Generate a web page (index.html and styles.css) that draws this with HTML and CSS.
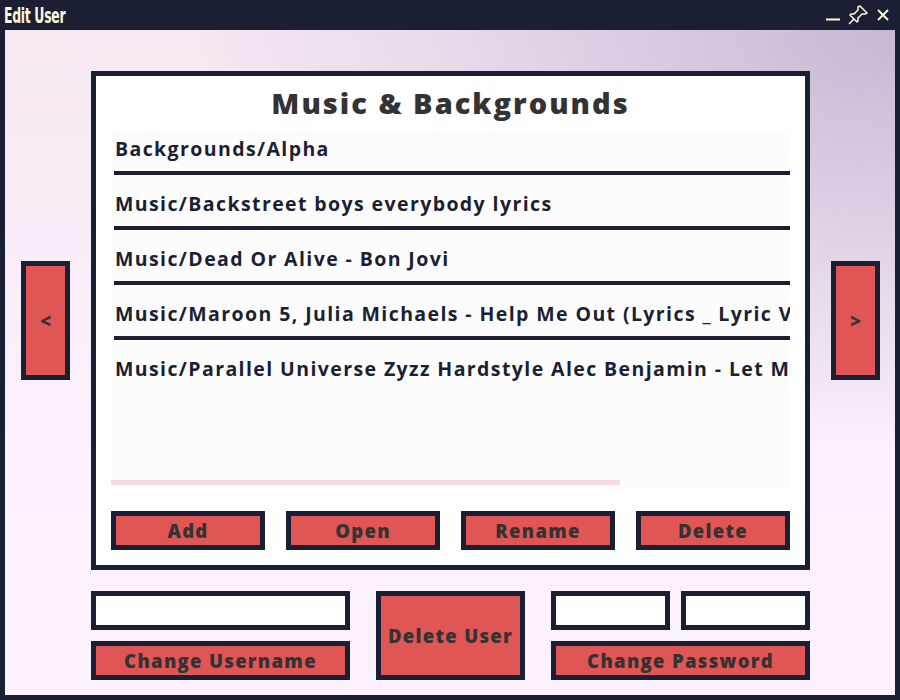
FILE: index.html
```html
<!DOCTYPE html>
<html lang="en">
<head>
    <meta charset="UTF-8">
    <title>Edit User</title>
    <link rel="stylesheet" href="styles.css">
</head>
<body>

<div class="window">
    <div class="titlebar">
        <span class="title">Edit User</span>
        <div class="controls">
            <svg width="16" height="16" viewBox="0 0 16 16"><path d="M1 12.5h14" stroke="#fdf6dc" stroke-width="2"/></svg>
            <svg width="22" height="22" viewBox="0 0 22 22" fill="none" stroke="#fdf6dc" stroke-width="1.6" stroke-linejoin="round">
                <path d="M13 2l7 7-2 1-3 0-4 4 0 3-1 1-7-7 1-1 3 0 4-4 0-3z"/>
                <path d="M7 15l-5 5"/>
            </svg>
            <svg width="16" height="16" viewBox="0 0 16 16"><path d="M3 3l10 10M13 3L3 13" stroke="#fdf6dc" stroke-width="2"/></svg>
        </div>
    </div>

    <div class="content">
        <div class="middle">
            <button class="side-btn">&lt;</button>

            <div class="panel">
                <h1>Music &amp; Backgrounds</h1>
                <div class="list">
                    <div class="item first">Backgrounds/Alpha</div>
                    <div class="item">Music/Backstreet boys everybody lyrics</div>
                    <div class="item">Music/Dead Or Alive - Bon Jovi</div>
                    <div class="item">Music/Maroon 5, Julia Michaels - Help Me Out (Lyrics _ Lyric Video)</div>
                    <div class="item last">Music/Parallel Universe Zyzz Hardstyle Alec Benjamin - Let Me Down Slowly</div>
                    <div class="scrollbar"></div>
                </div>
                <div class="actions">
                    <button class="btn">Add</button>
                    <button class="btn">Open</button>
                    <button class="btn">Rename</button>
                    <button class="btn">Delete</button>
                </div>
            </div>

            <button class="side-btn">&gt;</button>
        </div>

        <div class="bottom">
            <div class="col">
                <input type="text" class="field">
                <button class="btn">Change Username</button>
            </div>
            <button class="btn big">Delete User</button>
            <div class="col">
                <div class="pair">
                    <input type="text" class="field">
                    <input type="text" class="field">
                </div>
                <button class="btn">Change Password</button>
            </div>
        </div>
    </div>
</div>

</body>
</html>
```

FILE: styles.css
```css
* {
    box-sizing: border-box;
}
body {
    margin: 0;
    padding: 0;
    width: 900px;
    height: 700px;
    overflow: hidden;
    font-family: "Open Sans", "Noto Sans", sans-serif;
}
.window {
    width: 900px;
    height: 700px;
    background-color: #1b1f33;
    display: flex;
    flex-direction: column;
    padding: 0 5px 5px 5px;
}
.titlebar {
    height: 30px;
    display: flex;
    align-items: center;
    justify-content: space-between;
    flex-shrink: 0;
}
.title {
    font-family: "DejaVu Sans Condensed", "DejaVu Sans", sans-serif;
    font-weight: bold;
    font-size: 21px;
    color: #fdf6dc;
    letter-spacing: -0.5px;
    margin-left: -1px;
    margin-top: 1px;
    transform: scaleX(0.66);
    transform-origin: left center;
}
.controls {
    display: flex;
    align-items: center;
    gap: 6px;
    margin-right: 4px;
}
.content {
    flex: 1;
    background: radial-gradient(ellipse 700px 420px at 100% 0%, #c5b8d4 0%, #e3d6e7 55%, rgba(250,241,252,0) 100%), linear-gradient(180deg, #f5e8f2 0%, #faf1fc 60%, #fbf2fd 100%);
    display: flex;
    flex-direction: column;
    padding: 41px 15px 0 16px;
}
.middle {
    display: flex;
    align-items: center;
    gap: 21px;
}
.side-btn {
    width: 50px;
    height: 119px;
    background-color: #e05654;
    border: 5px solid #1b1f33;
    color: #333;
    font-family: "Open Sans", sans-serif;
    font-weight: 800;
    font-size: 19px;
    padding: 0;
}
.panel {
    width: 719px;
    height: 499px;
    background-color: #fff;
    border: 5px solid #1b1f33;
    padding: 0 15px 0 15px;
    display: flex;
    flex-direction: column;
}
.panel h1 {
    margin: 7px 0 0 0;
    height: 47px;
    text-align: center;
    font-size: 29px;
    font-weight: 800;
    letter-spacing: 2px;
    color: #333;
    line-height: 40px;
}
.list {
    height: 359px;
    background-color: #fcfcfc;
    position: relative;
    overflow: hidden;
    padding: 0 0 0 3px;
}
.item {
    height: 55px;
    padding-top: 16px;
    border-bottom: 4px solid #1b1f33;
    font-size: 19.5px;
    font-weight: bold;
    color: #1b1f33;
    letter-spacing: 1.4px;
    white-space: nowrap;
    overflow: hidden;
    line-height: 26px;
    padding-left: 1px;
}
.item.first {
    height: 45px;
    padding-top: 6px;
}
.item.last {
    border-bottom: none;
}
.scrollbar {
    position: absolute;
    left: 0;
    bottom: 4px;
    width: 509px;
    height: 5px;
    background-color: #f8d9e2;
}
.actions {
    display: grid;
    grid-template-columns: repeat(4, 154px);
    justify-content: space-between;
    margin-top: 22px;
}
.btn {
    height: 39px;
    background-color: #e05654;
    border: 5px solid #1b1f33;
    color: #333;
    font-family: "Open Sans", "Noto Sans", sans-serif;
    font-weight: 800;
    font-size: 18.5px;
    letter-spacing: 1.3px;
    padding: 0;
    line-height: 28px;
}
.bottom {
    display: flex;
    margin: 21px 0 0 70px;
    gap: 26px;
    align-items: flex-start;
}
.col {
    display: flex;
    flex-direction: column;
    gap: 11px;
}
.bottom .col:first-child {
    width: 259px;
}
.bottom .col:last-child {
    width: 259px;
}
.field {
    height: 39px;
    border: 5px solid #1b1f33;
    background-color: #fff;
    width: 100%;
    outline: none;
}
.pair {
    display: flex;
    gap: 11px;
}
.pair .field:first-child {
    width: 119px;
}
.pair .field:last-child {
    width: 129px;
}
.btn.big {
    width: 149px;
    height: 89px;
}
```
